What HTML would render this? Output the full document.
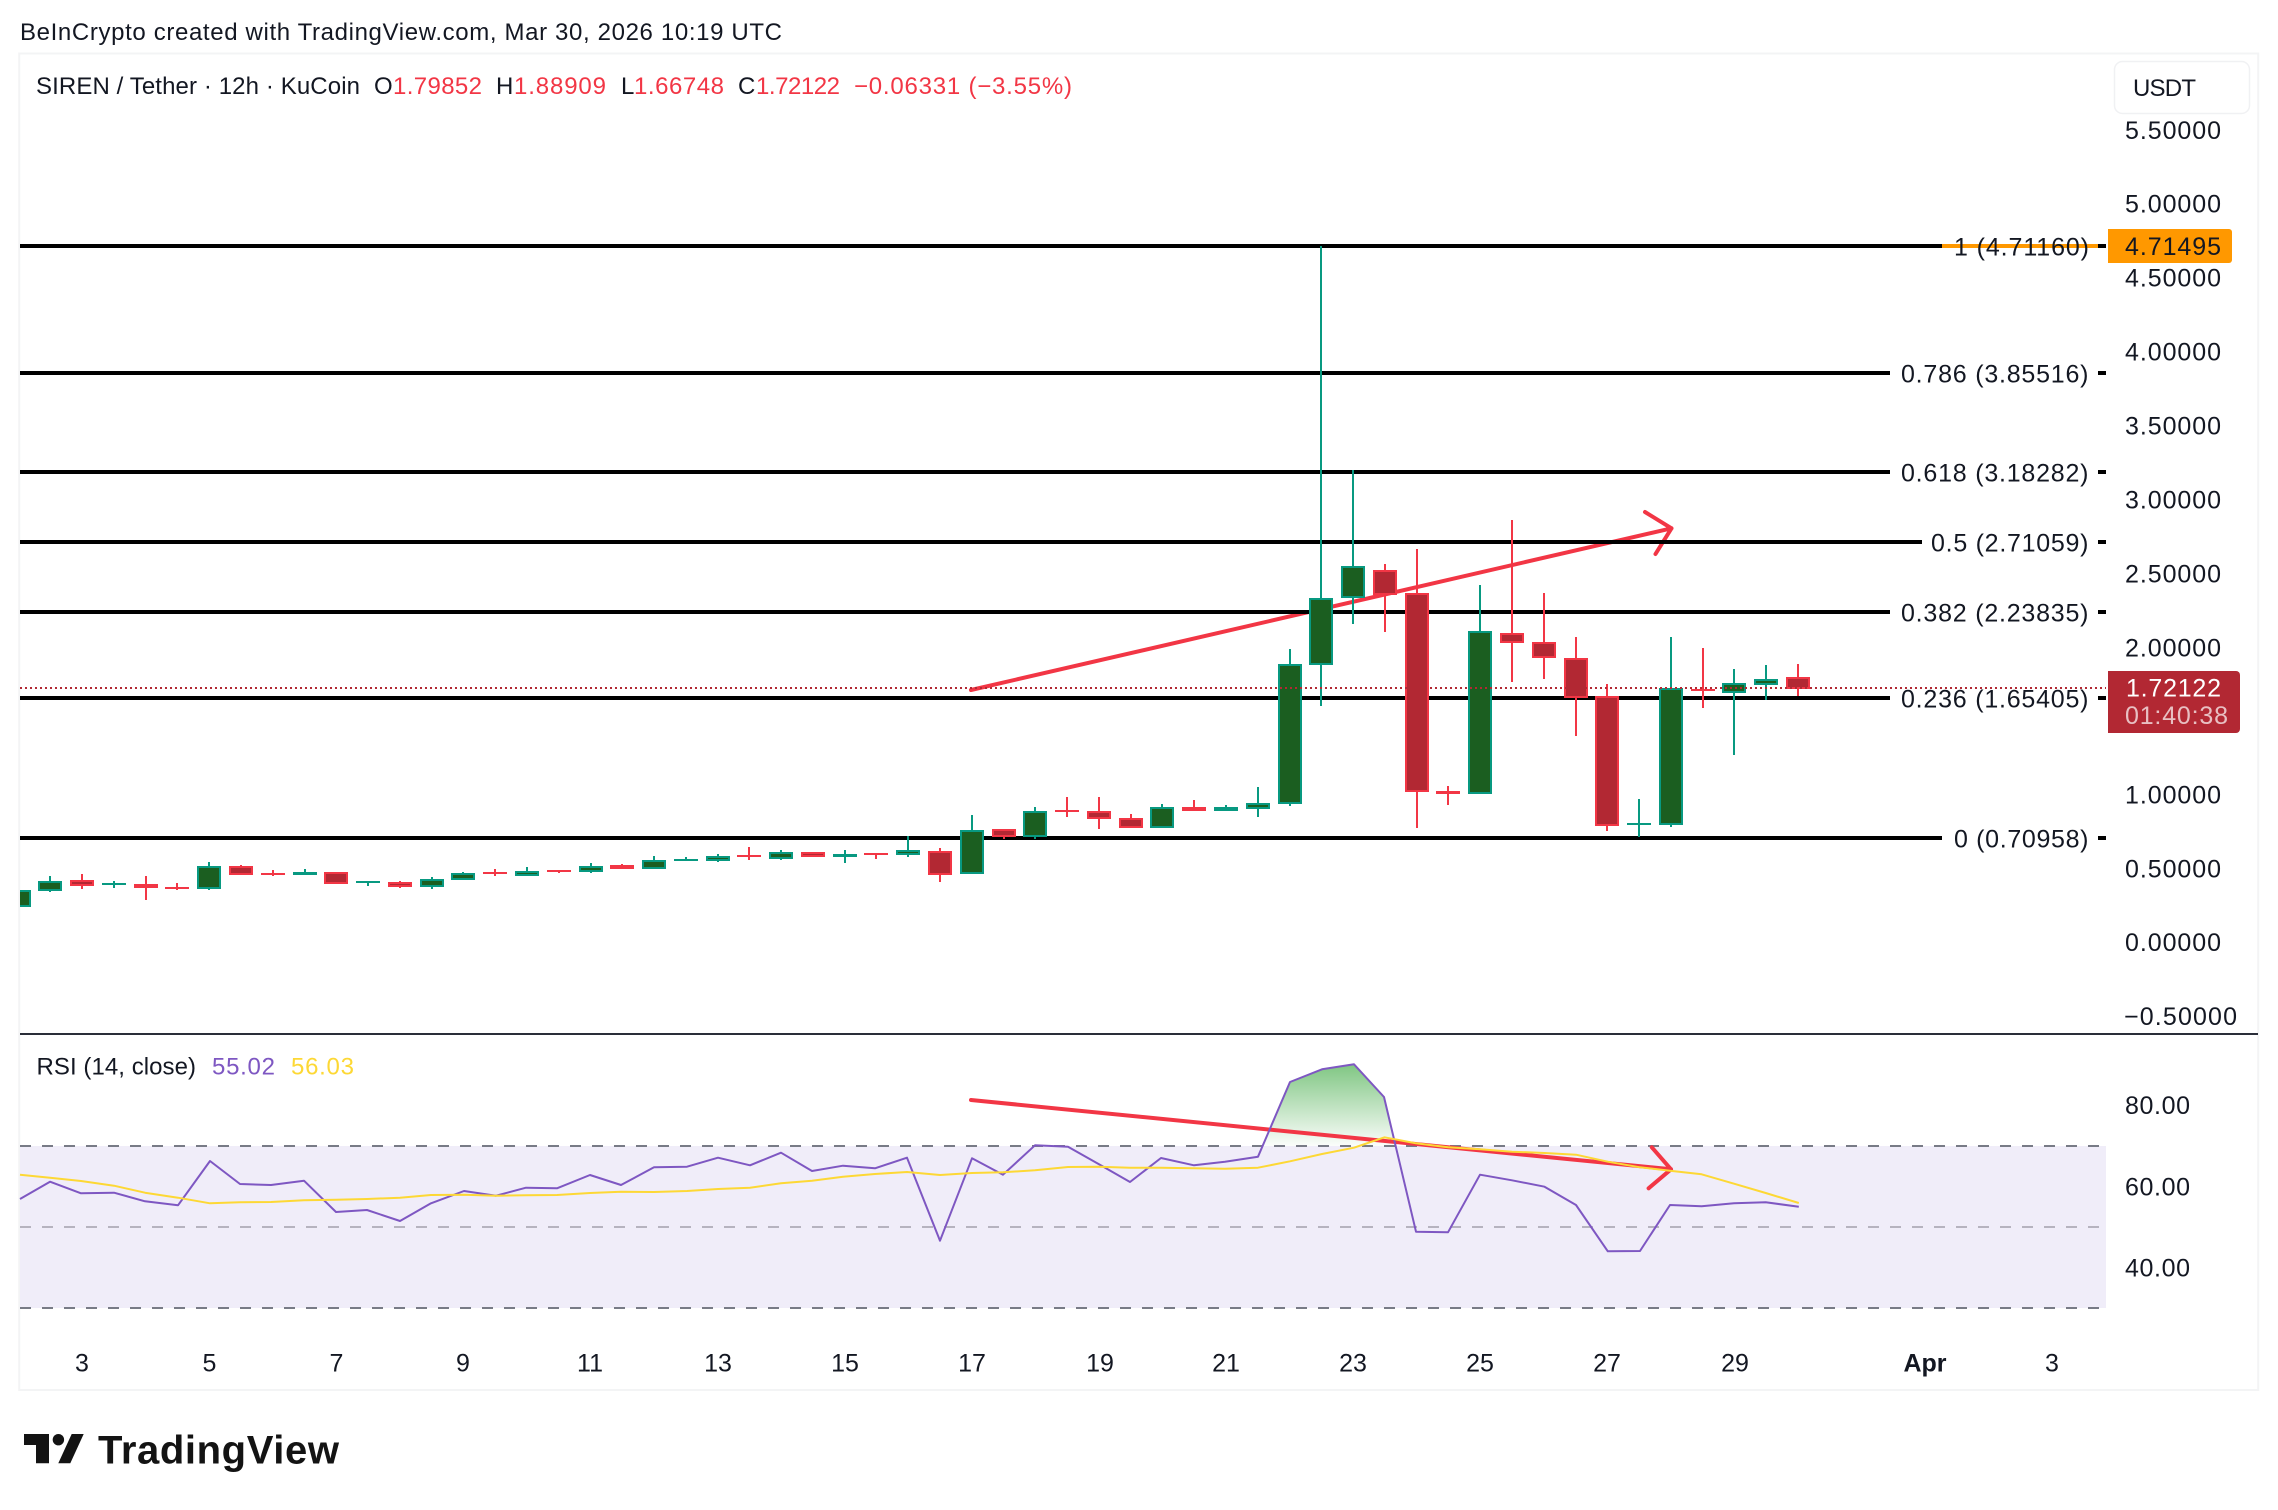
<!DOCTYPE html>
<html><head><meta charset="utf-8"><title>SIREN / Tether chart</title>
<style>
html,body{margin:0;padding:0;background:#fff;width:2278px;height:1510px;overflow:hidden}
svg{display:block}
text{font-family:"Liberation Sans",sans-serif;fill:#131722;font-size:25px}
.h{font-size:24px}
.r{fill:#f23645}
.m{text-anchor:middle}
</style></head><body>
<svg width="2278" height="1510" viewBox="0 0 2278 1510" xmlns="http://www.w3.org/2000/svg">
<defs><linearGradient id="gr" gradientUnits="userSpaceOnUse" x1="0" y1="1064" x2="0" y2="1146"><stop offset="0" stop-color="#7fc682"/><stop offset="1" stop-color="#fbfdfb"/></linearGradient></defs>
<rect width="2278" height="1510" fill="#fff"/>
<rect x="19.2" y="53.5" width="2239" height="1336.5" fill="none" stroke="#f3f4f5" stroke-width="2"/>

<text class="h" x="20" y="40" textLength="762">BeInCrypto created with TradingView.com, Mar 30, 2026 10:19 UTC</text>
<text class="h" x="36" y="94" textLength="324">SIREN / Tether · 12h · KuCoin</text>
<text class="h" x="374" y="94">O</text><text class="h r" x="393" y="94" textLength="89">1.79852</text>
<text class="h" x="496" y="94">H</text><text class="h r" x="514" y="94" textLength="92">1.88909</text>
<text class="h" x="621" y="94">L</text><text class="h r" x="634" y="94" textLength="90">1.66748</text>
<text class="h" x="738" y="94">C</text><text class="h r" x="756" y="94" textLength="84">1.72122</text>
<text class="h r" x="854" y="94" textLength="218">&#8722;0.06331 (&#8722;3.55%)</text>

<rect x="2114.5" y="61.5" width="135" height="52" rx="8" fill="#fff" stroke="#f0f1f3" stroke-width="1.5"/>
<text class="h" x="2133" y="96" textLength="63">USDT</text>

<!-- trend line price (under fib) -->
<path d="M971 690L1671.5 528.3M1645 512L1671.5 528.3L1655.5 554" fill="none" stroke="#f23645" stroke-width="4" stroke-linecap="round" stroke-linejoin="round"/>

<!-- fib lines -->
<g fill="#000">
<rect x="20" y="244" width="1922" height="4"/><rect x="2098" y="244" width="8" height="4"/>
<rect x="20" y="371" width="1870" height="4"/><rect x="2098" y="371" width="8" height="4"/>
<rect x="20" y="470" width="1870" height="4"/><rect x="2098" y="470" width="8" height="4"/>
<rect x="20" y="540" width="1902" height="4"/><rect x="2098" y="540" width="8" height="4"/>
<rect x="20" y="610" width="1870" height="4"/><rect x="2098" y="610" width="8" height="4"/>
<rect x="20" y="696" width="1870" height="4"/><rect x="2098" y="696" width="8" height="4"/>
<rect x="20" y="836" width="1922" height="4"/><rect x="2098" y="836" width="8" height="4"/>
</g>
<rect x="1942" y="244" width="156" height="4" fill="#ff9800"/>

<!-- wicks -->
<path fill="none" stroke="#089981" stroke-width="2" d="M50 876V892M114 881V888M209 862V890M305 869V875M368 881V886M432 877V889M463 872V880M527 867V876M591 863V873M654 856V869M686 857V861M718 854V862M781 850V860M845 850V863M908 836V857M972 815V874M1035 807V839M1162 804V828M1226 805V811M1258 787V817M1290 649V806M1321 246V706M1353 470V624M1480 585V794M1639 799V837M1671 637V827M1734 669V755M1766 665V700"/>
<path fill="none" stroke="#f23645" stroke-width="2" d="M82 874V889M146 876V900M177 883V890M241 865V875M273 870V876M400 881V888M495 869V876M559 870V873M622 864V869M749 847V860M876 853V859M940 848V882M1004 829V839M1067 797V817M1099 797V829M1131 814V828M1194 800V811M1385 564V632M1417 549V828M1448 786V805M1512 520V682M1544 593V679M1576 637V736M1607 684V831M1703 648V708M1798 664V696"/>

<!-- green bodies outer -->
<path fill="#089981" d="M20 890h11v17h-11zM38 881h24v10h-24zM102 883h24v2h-24zM197 866h24v23h-24zM293 872h24v3h-24zM356 881h24v2h-24zM420 879h24v8h-24zM451 873h24v7h-24zM515 871h24v5h-24zM579 866h24v6h-24zM642 860h24v9h-24zM674 859h24v2h-24zM706 856h24v5h-24zM769 852h24v7h-24zM833 854h24v3h-24zM896 850h24v5h-24zM960 830h24v44h-24zM1023 811h24v26h-24zM1150 807h24v21h-24zM1214 807h24v4h-24zM1246 803h24v6h-24zM1278 664h24v140h-24zM1309 598h24v67h-24zM1341 566h24v32h-24zM1468 631h24v163h-24zM1627 823h24v2h-24zM1659 688h24v137h-24zM1722 683h24v10h-24zM1754 679h24v6h-24z"/>
<path fill="#1b5e20" d="M20 892h9v13h-9zM40 883h20v6h-20zM199 868h20v19h-20zM422 881h20v4h-20zM453 875h20v3h-20zM517 873h20v1h-20zM581 868h20v2h-20zM644 862h20v5h-20zM708 858h20v1h-20zM771 854h20v3h-20zM898 852h20v1h-20zM962 832h20v40h-20zM1025 813h20v22h-20zM1152 809h20v17h-20zM1248 805h20v2h-20zM1280 666h20v136h-20zM1311 600h20v63h-20zM1343 568h20v28h-20zM1470 633h20v159h-20zM1661 690h20v133h-20zM1724 685h20v6h-20zM1756 681h20v2h-20z"/>
<!-- red bodies outer -->
<path fill="#f23645" d="M70 880h24v6h-24zM134 884h24v4h-24zM165 887h24v2h-24zM229 866h24v9h-24zM261 873h24v2h-24zM324 872h24v12h-24zM388 882h24v5h-24zM483 872h24v2h-24zM547 870h24v2h-24zM610 865h24v4h-24zM737 855h24v2h-24zM801 852h24v5h-24zM864 853h24v2h-24zM928 851h24v24h-24zM992 829h24v8h-24zM1055 810h24v2h-24zM1087 811h24v8h-24zM1119 818h24v10h-24zM1182 807h24v4h-24zM1373 570h24v25h-24zM1405 593h24v199h-24zM1436 791h24v3h-24zM1500 633h24v10h-24zM1532 642h24v16h-24zM1564 658h24v40h-24zM1595 696h24v130h-24zM1691 689h24v2h-24zM1786 677h24v12h-24z"/>
<path fill="#b22833" d="M72 882h20v2h-20zM231 868h20v5h-20zM326 874h20v8h-20zM390 884h20v1h-20zM803 854h20v1h-20zM930 853h20v20h-20zM994 831h20v4h-20zM1089 813h20v4h-20zM1121 820h20v6h-20zM1375 572h20v21h-20zM1407 595h20v195h-20zM1502 635h20v6h-20zM1534 644h20v12h-20zM1566 660h20v36h-20zM1597 698h20v126h-20zM1788 679h20v8h-20z"/>

<!-- price dotted line -->
<path d="M20 688H2106" stroke="#b22833" stroke-width="2" stroke-dasharray="2 3" fill="none"/>

<!-- fib labels -->
<text x="1954" y="255.7" textLength="135">1 (4.71160)</text>
<text x="1901" y="382.7" textLength="187.5">0.786 (3.85516)</text>
<text x="1901" y="481.7" textLength="187.5">0.618 (3.18282)</text>
<text x="1931" y="551.7" textLength="157.5">0.5 (2.71059)</text>
<text x="1901" y="621.7" textLength="187.5">0.382 (2.23835)</text>
<text x="1901" y="707.7" textLength="187.5">0.236 (1.65405)</text>
<text x="1954" y="847.7" textLength="134.5">0 (0.70958)</text>

<!-- price axis -->
<text x="2125" y="139" textLength="96">5.50000</text>
<text x="2125" y="212.5" textLength="96">5.00000</text>
<text x="2125" y="286.5" textLength="96">4.50000</text>
<text x="2125" y="360.5" textLength="96">4.00000</text>
<text x="2125" y="434.5" textLength="96">3.50000</text>
<text x="2125" y="508.5" textLength="96">3.00000</text>
<text x="2125" y="582.5" textLength="96">2.50000</text>
<text x="2125" y="656.7" textLength="96">2.00000</text>
<text x="2125" y="803.5" textLength="96">1.00000</text>
<text x="2125" y="877.3" textLength="96">0.50000</text>
<text x="2125" y="951" textLength="96">0.00000</text>
<text x="2124" y="1025" textLength="113">&#8722;0.50000</text>

<path d="M2108 229H2229a3 3 0 0 1 3 3V260a3 3 0 0 1-3 3H2108Z" fill="#ff9800"/>
<text x="2125" y="255" textLength="96">4.71495</text>
<path d="M2108 671H2236a4 4 0 0 1 4 4V729a4 4 0 0 1-4 4H2108Z" fill="#b22833"/>
<text x="2126" y="696.7" textLength="95" style="fill:#fff">1.72122</text>
<text x="2125" y="724" textLength="103" style="fill:rgba(255,255,255,.7)">01:40:38</text>

<!-- separator -->
<rect x="20" y="1033" width="2238" height="2" fill="#2a2e39"/>

<!-- RSI -->
<text class="h" x="36.5" y="1074.5" textLength="159.5">RSI (14, close)</text>
<text class="h" x="212" y="1074.5" textLength="63" style="fill:#7e57c2">55.02</text>
<text class="h" x="291" y="1074.5" textLength="63" style="fill:#fdd835">56.03</text>

<rect x="20" y="1146" width="2086" height="162" fill="#f0edf9"/>
<path d="M1262.6 1146L1290 1082L1322 1069.3L1354 1064.3L1384 1097L1395.6 1146Z" fill="url(#gr)"/>
<path d="M20 1146H2106M20 1308H2106" stroke="#787b86" stroke-width="2" stroke-dasharray="11 11" fill="none"/>
<path d="M20 1227H2106" stroke="#b6b3bf" stroke-width="2" stroke-dasharray="11 11" fill="none"/>

<path d="M971 1100L1671 1169.3M1651.8 1147.3L1671 1169.3L1648.6 1188.3" fill="none" stroke="#f23645" stroke-width="4" stroke-linecap="round" stroke-linejoin="round"/>

<polyline fill="none" stroke="#7e57c2" stroke-width="2" stroke-linejoin="round" points="20,1199 50,1181.7 81,1193.3 114,1192.7 145,1201.3 178,1205.3 210,1161 240,1184 271,1185 304,1180.7 336,1212 367,1210 400,1221 431,1203.3 464,1191 496,1195.7 526,1187.7 557,1188.3 590,1175 621,1185 654,1167.3 687,1166.7 718,1157.7 750,1165.3 781,1152.7 812,1171 843,1165.7 875,1168.3 907,1157.7 940,1240.7 972,1158.3 1003,1174.7 1035,1145.3 1068,1146.7 1099,1164.3 1130,1182 1161,1158 1194,1165.3 1225,1161.7 1258,1156.7 1290,1082 1322,1069.3 1354,1064.3 1384,1097 1416,1231.7 1448,1232.3 1480,1174.7 1512,1180.3 1544.5,1186.7 1576,1205 1607.8,1251.3 1640,1251 1670,1205 1701.6,1206.3 1734,1203.3 1765.7,1202.3 1798.8,1206.7"/>
<polyline fill="none" stroke="#fdd835" stroke-width="2" stroke-linejoin="round" points="20,1174.7 50,1177.7 81,1181 114,1185.7 145,1192.7 178,1197.7 210,1203.3 240,1202.3 271,1202 304,1200.3 336,1199.7 367,1199 400,1197.7 431,1195 464,1194.7 496,1195.7 526,1195.3 557,1195 590,1193 621,1191.7 654,1192 687,1191 718,1189 750,1187.7 781,1183.3 812,1180.7 843,1176.7 875,1174 907,1172 940,1175 972,1173 1003,1172.3 1035,1170.3 1068,1167 1099,1166.7 1130,1167.7 1161,1167.7 1194,1168.3 1225,1168.7 1258,1167.7 1290,1161.3 1322,1154 1354,1147.7 1384.5,1137.3 1416,1143.3 1448,1147.3 1480,1149.3 1512,1151.7 1544.5,1153 1576,1154.7 1607.8,1161.7 1640,1167.3 1670,1170.7 1701.6,1174.3 1734,1183.7 1765.7,1193 1798.8,1203"/>

<text x="2125" y="1114" textLength="65">80.00</text>
<text x="2125" y="1195.7" textLength="65">60.00</text>
<text x="2125" y="1276.7" textLength="65">40.00</text>

<!-- time axis -->
<text class="m" x="82" y="1371.7">3</text>
<text class="m" x="209.5" y="1371.7">5</text>
<text class="m" x="336.5" y="1371.7">7</text>
<text class="m" x="463" y="1371.7">9</text>
<text class="m" x="590" y="1371.7">11</text>
<text class="m" x="718" y="1371.7">13</text>
<text class="m" x="845" y="1371.7">15</text>
<text class="m" x="972" y="1371.7">17</text>
<text class="m" x="1100" y="1371.7">19</text>
<text class="m" x="1226" y="1371.7">21</text>
<text class="m" x="1353" y="1371.7">23</text>
<text class="m" x="1480" y="1371.7">25</text>
<text class="m" x="1607" y="1371.7">27</text>
<text class="m" x="1735" y="1371.7">29</text>
<text class="m" x="1925" y="1371.7" style="font-weight:bold">Apr</text>
<text class="m" x="2052" y="1371.7">3</text>

<!-- logo -->
<path fill="#131313" d="M24 1434H49V1463.3H36V1445H24Z"/>
<circle cx="58.4" cy="1439.7" r="5.7" fill="#131313"/>
<path fill="#131313" d="M71.7 1434H83.7L70.3 1463.3H58.3Z"/>
<text x="98" y="1463.3" textLength="241" style="font-size:40px;font-weight:bold;fill:#131313">TradingView</text>
</svg>
</body></html>
